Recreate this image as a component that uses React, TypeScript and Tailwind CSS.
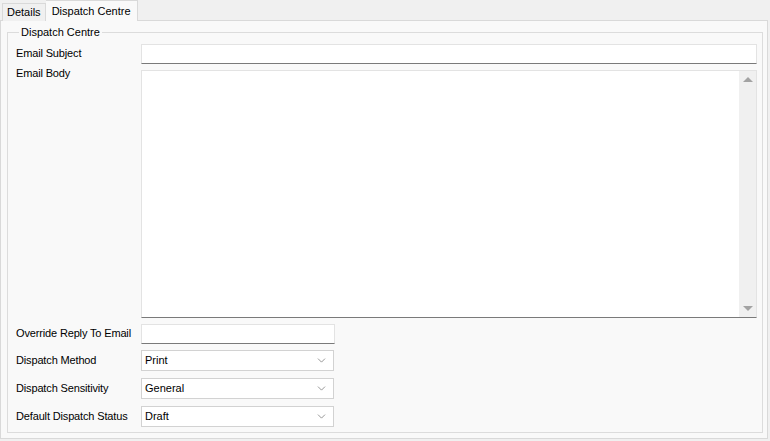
import { ChevronDown } from "lucide-react";

const font = { fontFamily: '"Liberation Sans", Arial, sans-serif' };

const Label = ({ text, className = "" }: { text: string; className?: string }) => (
  <div className={`text-[11px] leading-[13px] tracking-[-0.15px] text-black ${className}`}>{text}</div>
);

const TextBox = ({ className = "" }: { className?: string }) => (
  <div
    className={`h-[20px] bg-white border border-[#e3e3e3] border-b-[#7a7a7a] ${className}`}
  />
);

const Combo = ({ value }: { value: string }) => (
  <div className="flex items-center justify-between h-[21px] w-[193px] bg-white border border-[#d2d2d2] pl-[3px] pr-[5px]">
    <span className="text-[11px] leading-[13px] text-black">{value}</span>
    <ChevronDown size={13} strokeWidth={1.2} className="text-[#606060]" />
  </div>
);

export default function App() {
  return (
    <div style={font} className="w-[770px] h-[441px] bg-[#f0f0f0] flex flex-col overflow-hidden">
      {/* tab strip */}
      <div className="flex items-end h-[21px] pl-[2px] relative z-10">
        <div className="h-[18px] px-[4px] flex items-center border border-b-0 border-[#d9d9d9] bg-[#f0f0f0] text-[11px] text-black">
          Details
        </div>
        <div className="h-[21px] px-[6px] pt-[2px] flex items-start border border-b-0 border-l-0 border-[#d9d9d9] bg-[#f9f9f9] text-[11px] text-black">
          Dispatch Centre
        </div>
      </div>

      {/* tab page */}
      <div className="-mt-px w-[768px] h-[419px] border border-[#d9d9d9] bg-[#f9f9f9] pl-[6px] pr-[4px] pt-[5px]">
        <fieldset className="h-[407px] border border-[#dcdcdc] pl-[8px] pr-[5px] pb-[5px]">
          <legend className="ml-[3px] px-[2px] text-[11px] leading-[13px] text-black">Dispatch Centre</legend>

          <div className="grid grid-cols-[125px_1fr] gap-y-[6px] mt-[5px]">
            <Label text="Email Subject" className="pt-[3px]" />
            <TextBox />

            <Label text="Email Body" className="-mt-[3px]" />
            <div className="h-[248px] bg-white border border-[#e3e3e3] border-b-[#7a7a7a] flex justify-end">
              {/* vertical scrollbar */}
              <div className="w-[17px] bg-[#f0f0f0] flex flex-col justify-between items-center py-[6px]">
                <div className="w-0 h-0 border-l-[5px] border-r-[5px] border-b-[5px] border-l-transparent border-r-transparent border-b-[#a3a3a3]" />
                <div className="w-0 h-0 border-l-[5px] border-r-[5px] border-t-[5px] border-l-transparent border-r-transparent border-t-[#a3a3a3]" />
              </div>
            </div>

            <Label text="Override Reply To Email" className="pt-[3px]" />
            <TextBox className="w-[194px]" />
          </div>

          <div className="grid grid-cols-[125px_1fr] gap-y-[7px] mt-[6px]">
            <Label text="Dispatch Method" className="pt-[4px]" />
            <Combo value="Print" />

            <Label text="Dispatch Sensitivity" className="pt-[4px]" />
            <Combo value="General" />

            <Label text="Default Dispatch Status" className="pt-[4px]" />
            <Combo value="Draft" />
          </div>
        </fieldset>
      </div>
    </div>
  );
}
